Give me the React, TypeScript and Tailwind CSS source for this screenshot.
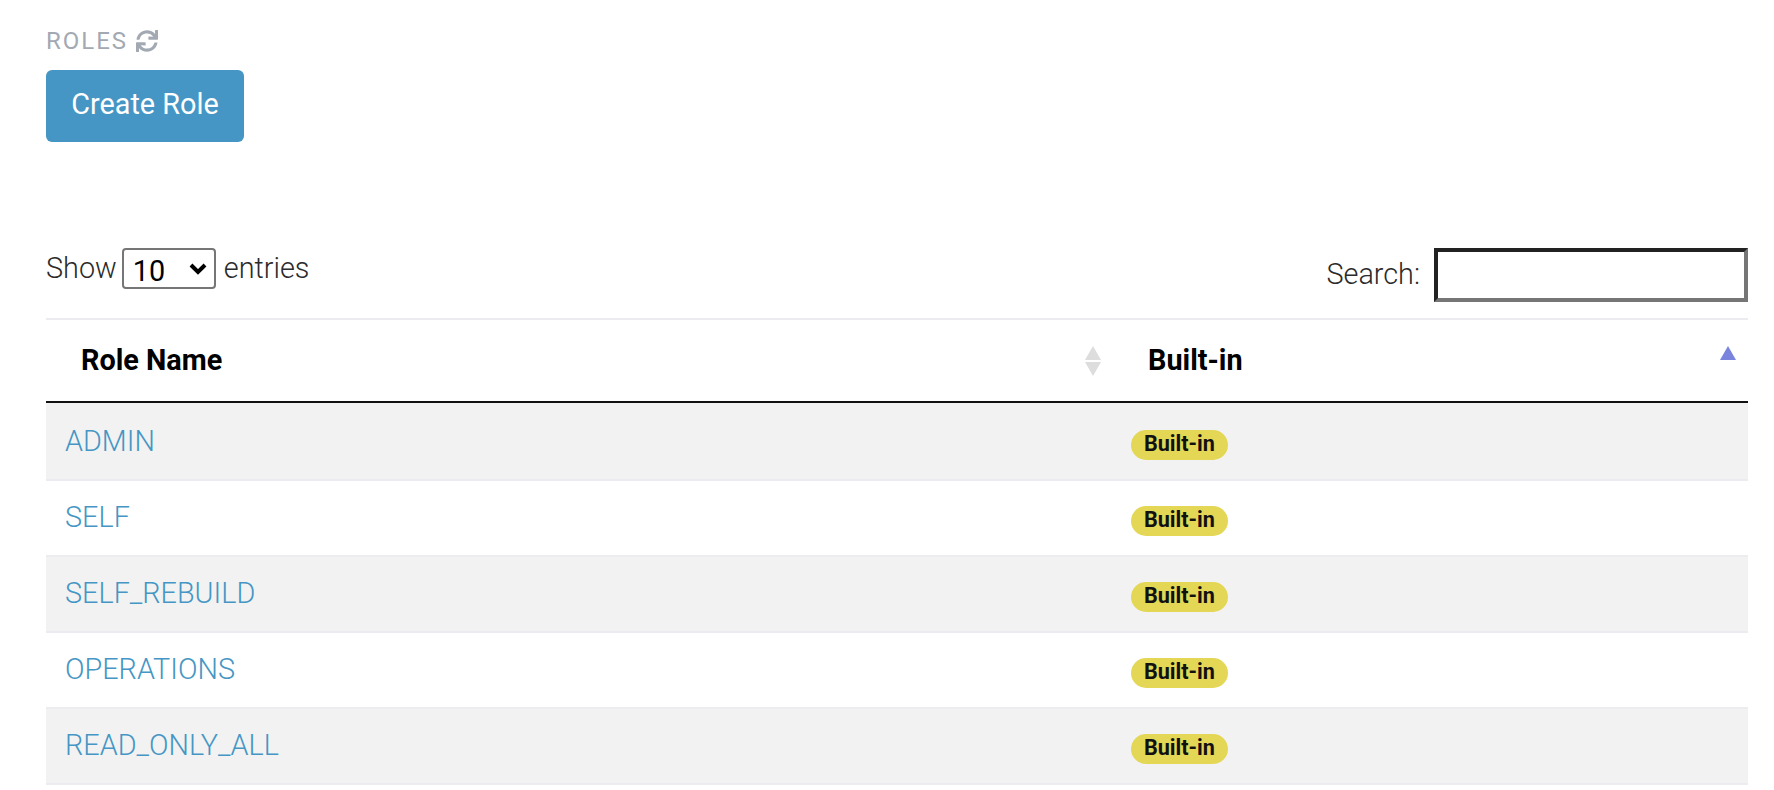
import { FaSync } from "react-icons/fa";

const roles = ["ADMIN", "SELF", "SELF_REBUILD", "OPERATIONS", "READ_ONLY_ALL"];

export default function App() {
  return (
    <div className="h-screen overflow-hidden bg-white pl-[46px] pr-[26px] pt-[30px] font-['Roboto',sans-serif]">
      <div className="flex h-[22px] items-center gap-[8px] text-[24px] leading-none tracking-[2px] text-[#a3a9b3]">
        ROLES
        <FaSync className="h-[22px] w-[22px]" />
      </div>
      <button className="mt-[18px] h-[72px] w-[198px] rounded-[6px] bg-[#4596c4] pb-[2px] text-[28.8px] text-white">
        Create Role
      </button>

      <div className="mt-[106px] flex h-[70px] justify-between font-light text-[#2b2b2b]">
        <label className="flex h-[41px] items-center gap-[7px] text-[28.8px]">
          <span className="mr-[-2px]">Show</span>
          <span className="relative">
            <select className="block h-[41px] w-[94px] appearance-none rounded-[4px] border-2 border-[#767676] bg-white pb-[6px] pl-[9px] font-['Roboto',sans-serif] text-[28.8px] font-normal text-black">
              <option>10</option>
            </select>
            <svg width="18" height="13" viewBox="0 0 18 13" className="pointer-events-none absolute right-[9px] top-[14px]">
              <path d="M2 3 9 10 16 3" fill="none" stroke="#000000" strokeWidth="4" />
            </svg>
          </span>
          <span className="ml-[1px]">entries</span>
        </label>
        <label className="flex h-[54px] items-center gap-[14px] text-[28.8px]">
          Search:
          <input className="h-[54px] w-[314px] border-4 border-t-[#222222] border-r-[#767676] border-b-[#767676] border-l-[#222222] bg-white" />
        </label>
      </div>

      <table className="w-full table-fixed border-collapse border-t-2 border-[#ebebf0]">
        <thead>
          <tr className="h-[83px] border-b-2 border-[#111111]">
            <th className="w-[1065px] pl-[35px] pr-[36px] text-left text-[28.8px] font-bold text-black">
              <div className="flex items-center justify-between">
                Role Name
                <SortArrows />
              </div>
            </th>
            <th className="pl-[37px] pr-[36px] text-left text-[28.8px] font-bold text-black">
              <div className="flex items-center justify-between">
                Built-in
                <svg width="18" height="16" viewBox="0 0 18 16" className="relative right-[-25px] top-[-8px]">
                  <path d="M9 1 17 15H1Z" fill="#7b84dc" />
                </svg>
              </div>
            </th>
          </tr>
        </thead>
        <tbody>
          {roles.map((role, i) => (
            <tr key={role} className={`border-b-2 border-[#ebebf0] ${i === 0 ? "h-[78px]" : "h-[76px]"} ${i % 2 === 0 ? "bg-[#f2f2f3]" : "bg-white"}`}>
              <td className={`pl-[19px] pr-[20px] text-[28.8px] font-light text-[#4596c4] ${i === 0 ? "pt-[2px]" : ""}`}>{role}</td>
              <td className={`px-[20px] ${i === 0 ? "pt-[7px]" : "pt-[5px]"}`}>
                <span className="inline-flex h-[30px] items-center rounded-full bg-[#e3d755] px-[13px] text-[21.6px] font-bold text-[#111111]">
                  Built-in
                </span>
              </td>
            </tr>
          ))}
        </tbody>
      </table>
    </div>
  );
}

function SortArrows() {
  return (
    <svg width="18" height="30" viewBox="0 0 18 30" className="relative right-[-27px]">
      <path d="M9 0 17 14H1Z" fill="#dddddd" />
      <path d="M9 30 17 16H1Z" fill="#dddddd" />
    </svg>
  );
}
